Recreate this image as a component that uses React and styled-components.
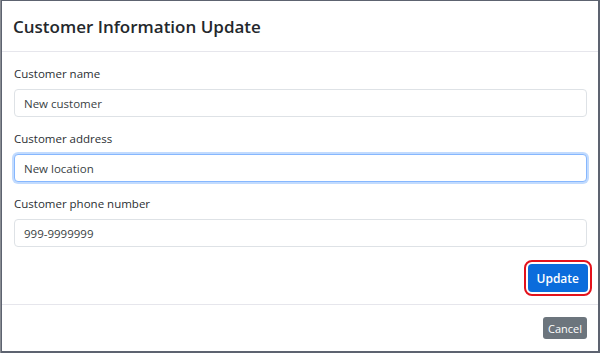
import React from 'react'
import styled, { createGlobalStyle } from 'styled-components'

const GlobalStyle = createGlobalStyle`
    html, body {
        margin: 0;
        padding: 0;
        background-color: #5d6370;
    }
    body {
        font-family: "Open Sans", "Noto Sans", "Liberation Sans", sans-serif;
        color: #212529;
    }
`

const App = () => {
    return (
        <>
            <GlobalStyle />
            <Backdrop>
                <Modal>
                    <Header>
                        <Title>Customer Information Update</Title>
                    </Header>

                    <Body>
                        <Field>
                            <Label>Customer name</Label>
                            <Input defaultValue='New customer' />
                        </Field>
                        <Field>
                            <Label>Customer address</Label>
                            <Input defaultValue='New location' focused />
                        </Field>
                        <Field>
                            <Label>Customer phone number</Label>
                            <Input defaultValue='999-9999999' />
                        </Field>

                        <Actions>
                            <PrimaryButton>Update</PrimaryButton>
                        </Actions>
                    </Body>

                    <Footer>
                        <SecondaryButton>Cancel</SecondaryButton>
                    </Footer>
                </Modal>
            </Backdrop>
        </>
    )
}

export default App

const Backdrop = styled.div`
    width: 600px;
    height: 353px;
    padding: 1px 2px 2px 1px;
    box-sizing: border-box;
    border-left: 1px solid #8a8d93;
`

const Modal = styled.div`
    display: flex;
    flex-direction: column;
    height: 100%;
    background-color: white;
`

const Header = styled.div`
    display: flex;
    align-items: center;
    height: 50px;
    padding: 0 11px;
    border-bottom: 1px solid #e6e6ec;
`

const Title = styled.h5`
    margin: 0;
    font-size: 17px;
    font-weight: 600;
    color: #24282c;
`

const Body = styled.div`
    display: flex;
    flex-direction: column;
    padding: 12px 11px 12px 12px;
    border-bottom: 1px solid #e6e6ec;
`

const Field = styled.div`
    display: flex;
    flex-direction: column;
    margin-bottom: 12px;
`

const Label = styled.label`
    font-size: 11.5px;
    line-height: 20px;
    margin-bottom: 5px;
    color: #2b2f33;
`

const Input = styled.input`
    height: 28px;
    box-sizing: border-box;
    padding: 0 9px;
    font-family: inherit;
    font-size: 11.5px;
    color: #3a3f44;
    border-radius: 4px;
    outline: none;
    border: 1px solid ${p => (p.focused ? '#86b7fe' : '#dee2e6')};
    box-shadow: ${p => (p.focused ? '0 0 0 2px rgba(13, 110, 253, 0.25)' : 'none')};
`

const Actions = styled.div`
    display: flex;
    justify-content: flex-end;
    margin-top: 5px;
`

const PrimaryButton = styled.button`
    height: 28px;
    padding: 0 9px;
    font-family: inherit;
    font-size: 12px;
    font-weight: 600;
    color: white;
    background-color: #0b6cdc;
    border: none;
    border-radius: 4px;
    outline: 2px solid #e3121c;
    outline-offset: 2px;
    margin-right: -1px;
`

const Footer = styled.div`
    display: flex;
    flex: 1;
    justify-content: flex-end;
    align-items: center;
    padding: 0 11px;
`

const SecondaryButton = styled.button`
    height: 22px;
    padding: 0 5px;
    font-family: inherit;
    font-size: 11px;
    color: white;
    background-color: #6c757d;
    border: none;
    border-radius: 3px;
`
